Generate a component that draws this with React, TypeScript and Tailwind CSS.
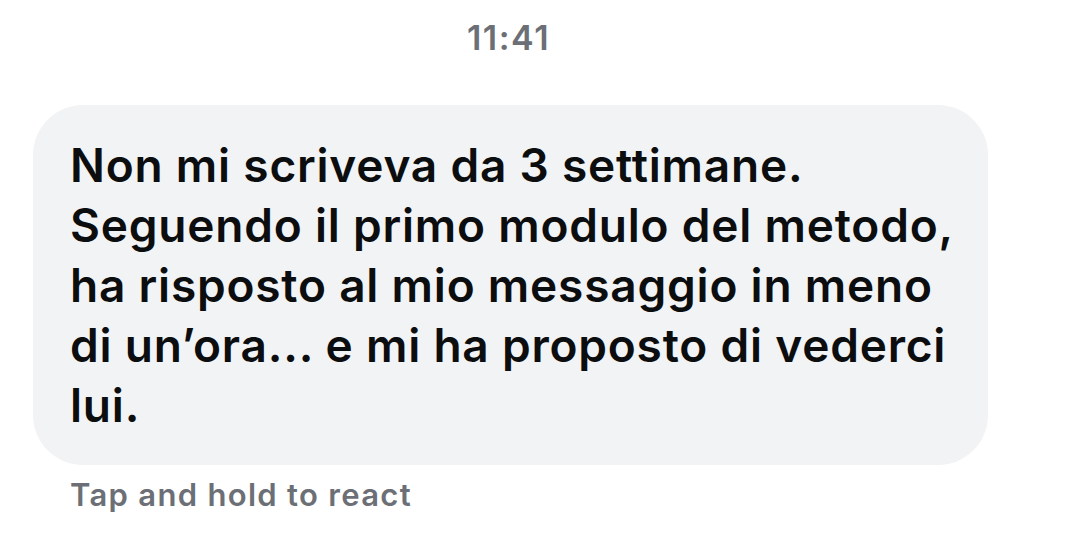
export default function App() {
  return (
    <div className="w-[1067px] h-[550px] bg-white overflow-hidden" style={{ fontFamily: "Inter, 'Noto Sans', sans-serif" }}>
      <div className="pt-[17px] h-[105px] pr-[50px] text-center text-[34px] leading-[42px] font-semibold tracking-[1.5px] text-[#6c6f76]">11:41</div>
      <div className="ml-[33px] w-[955px] rounded-[50px] bg-[#f2f3f5] pl-[37px] pr-[10px] py-[30px]">
        <p className="text-[46px] leading-[60px] font-semibold text-[#0c0d0f] tracking-[0.8px]">
          Non mi scriveva da 3 settimane.
          <br />
          Seguendo il primo modulo del metodo,
          <br />
          ha risposto al mio messaggio in meno
          <br />
          di un’ora... e mi ha proposto di vederci
          <br />
          lui.
        </p>
      </div>
      <div className="pl-[70px] pt-[10px] text-[31px] leading-[40px] font-semibold tracking-[1.3px] text-[#6c6f76]">Tap and hold to react</div>
    </div>
  );
}
